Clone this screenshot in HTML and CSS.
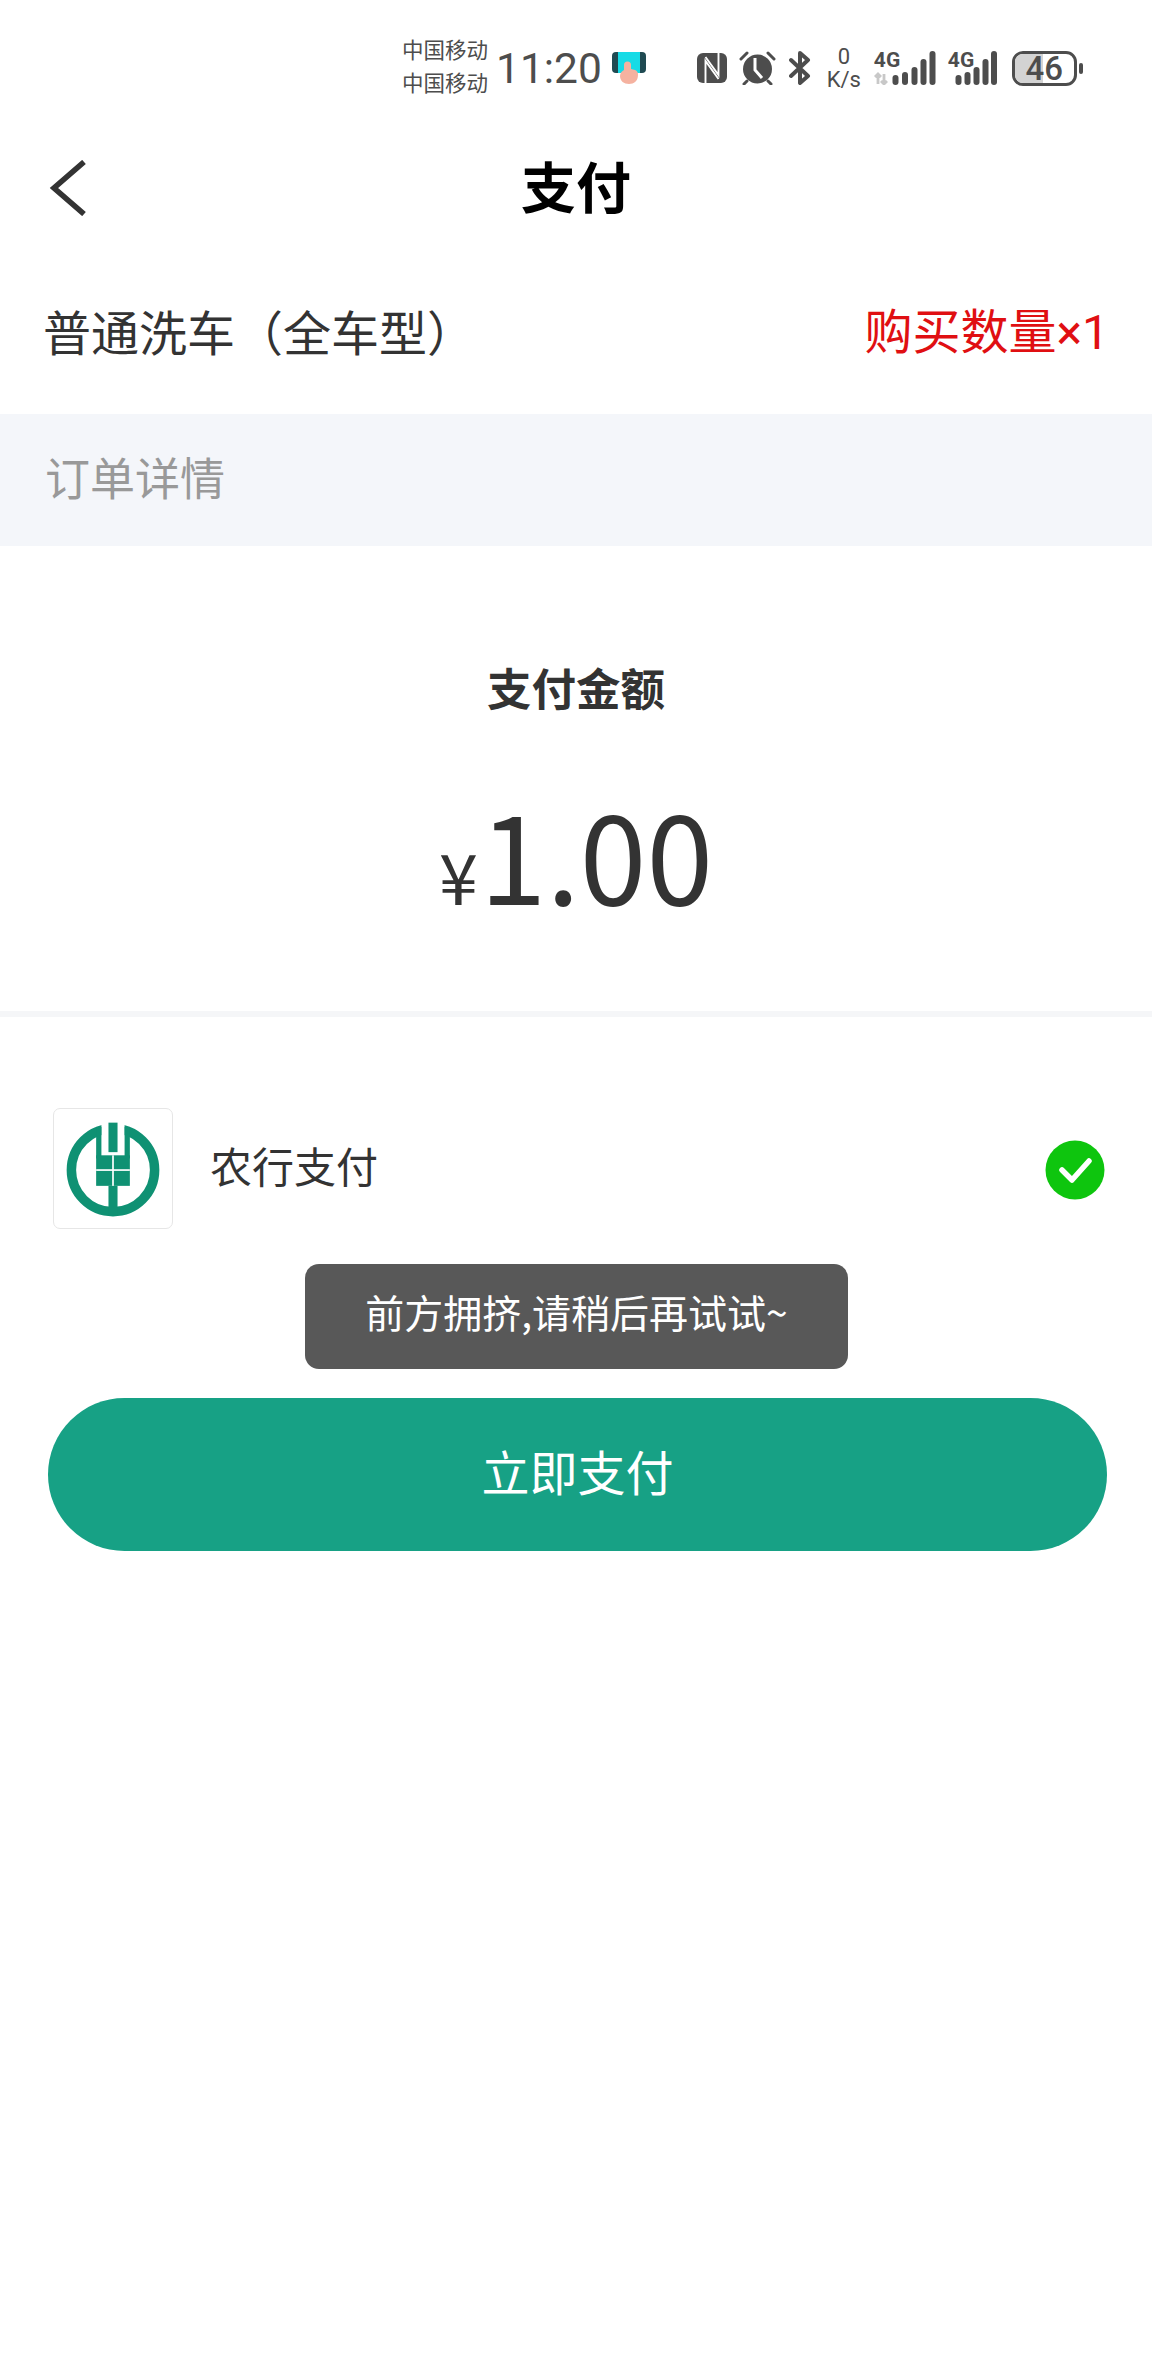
FILE: index.html
```html
<!DOCTYPE html>
<html lang="zh-CN">
	<head>
		<meta charset="UTF-8" />
		<meta name="viewport" content="width=device-width, initial-scale=1.0" />
		<title>支付</title>
		<link rel="stylesheet" href="styles.css">
	</head>
	<body>
		<div class="page">
			<div class="statusBar">
				<div class="carriers">
					<span>中国移动</span>
					<span>中国移动</span>
				</div>
				<span class="clock">11:20</span>
				<svg class="appIcon" width="34" height="34" viewBox="0 0 34 34">
					<rect x="0" y="1" width="34" height="21" rx="4" fill="#1f4a52" />
					<rect x="6" y="1" width="22" height="21" fill="#16dbe6" />
					<path d="M12 14a3.5 3.5 0 0 1 7 0v4l4 1a5 5 0 0 1 3 5c0 6-4 9-9 9s-9-3-9-8c0-3 2-5 4-6z" fill="#f5b2a0" />
				</svg>
				<svg class="nfcIcon" width="30" height="30" viewBox="0 0 30 30">
					<rect width="30" height="30" rx="6" fill="#4d4d4d" />
					<path d="M8.5 30V8l13 18" stroke="#fff" stroke-width="1.9" fill="none" />
					<path d="M21.5 0v22L8.5 4" stroke="#fff" stroke-width="1.9" fill="none" />
				</svg>
				<svg class="alarmIcon" width="37" height="34" viewBox="0 0 37 34">
					<circle cx="18.5" cy="18" r="14.5" fill="#4d4d4d" />
					<path d="M16 7v12l7 8" stroke="#fff" stroke-width="3" fill="none" />
					<path d="M2 8l6-6M35 8l-6-6M8 30l-3 3M29 30l3 3" stroke="#4d4d4d" stroke-width="3" stroke-linecap="round" />
				</svg>
				<svg class="btIcon" width="22" height="34" viewBox="0 0 22 34">
					<path d="M2 9l17 16-8 7V2l8 7L2 25" stroke="#4d4d4d" stroke-width="4" stroke-linejoin="round" stroke-linecap="round" fill="none" />
				</svg>
				<div class="speed">
					<span>0</span>
					<span>K/s</span>
				</div>
				<div class="signal">
					<span class="netType">4G</span>
					<svg width="62" height="34" viewBox="0 0 62 34">
						<path d="M4 33V23M1 26l3-3 3 3M10 23v10M7 30l3 3 3-3" stroke="#c8c8c8" stroke-width="2.8" fill="none" />
						<rect x="18.5" y="24" width="6" height="10" rx="3" fill="#4d4d4d" />
						<rect x="28" y="21" width="6" height="13" rx="3" fill="#4d4d4d" />
						<rect x="37.5" y="16" width="6" height="18" rx="3" fill="#4d4d4d" />
						<rect x="46.5" y="8" width="6" height="26" rx="3" fill="#4d4d4d" />
						<rect x="55.5" y="0" width="6" height="34" rx="3" fill="#4d4d4d" />
					</svg>
				</div>
				<div class="signal signalTwo">
					<span class="netType">4G</span>
					<svg width="49" height="34" viewBox="0 0 49 34">
						<rect x="7.5" y="24" width="6" height="10" rx="3" fill="#4d4d4d" />
						<rect x="16.5" y="21" width="6" height="13" rx="3" fill="#4d4d4d" />
						<rect x="25.5" y="16" width="6" height="18" rx="3" fill="#4d4d4d" />
						<rect x="34.5" y="8" width="6" height="26" rx="3" fill="#4d4d4d" />
						<rect x="43" y="0" width="6" height="34" rx="3" fill="#4d4d4d" />
					</svg>
				</div>
				<div class="battery">
					<div class="batteryLevel"></div>
					<span>46</span>
				</div>
				<div class="batteryNub"></div>
			</div>

			<div class="navBar">
				<svg class="backIcon" width="38" height="56" viewBox="0 0 38 56">
					<path d="M36 2L6 28l30 26" stroke="#333" stroke-width="5.6" fill="none" />
				</svg>
				<h1>支付</h1>
			</div>

			<div class="productRow">
				<span class="productName">普通洗车（全车型）</span>
				<span class="productCount">购买数量<span class="times">×1</span></span>
			</div>

			<div class="detailBand">订单详情</div>

			<div class="amountBox">
				<h2>支付金额</h2>
				<div class="amount">
					<span class="currency">¥</span>
					<span class="amountValue">1.00</span>
				</div>
			</div>

			<div class="payMethod">
				<div class="bankLogo">
					<svg width="118" height="118" viewBox="-56 -57 112 112">
						<circle cx="0" cy="0" r="39.5" stroke="#0f9173" stroke-width="9" fill="none" />
						<rect x="-11" y="-48" width="22" height="34" fill="#fff" />
						<rect x="-16" y="-41" width="5" height="30" fill="#0f9173" />
						<rect x="11" y="-41" width="5" height="30" fill="#0f9173" />
						<rect x="-16" y="-14" width="32" height="29" fill="#0f9173" />
						<rect x="-4.3" y="-45" width="8.6" height="28" fill="#0f9173" />
						<rect x="-4.3" y="15" width="8.6" height="28" fill="#0f9173" />
						<rect x="-16" y="-0.8" width="32" height="1.6" fill="#fff" />
						<rect x="-0.8" y="-14" width="1.6" height="29" fill="#fff" />
					</svg>
				</div>
				<span class="bankName">农行支付</span>
				<svg class="checkIcon" width="60" height="60" viewBox="0 0 60 60">
					<circle cx="30" cy="30" r="29.5" fill="#0ec50e" />
					<path d="M17 30l10 10 17-19" stroke="#fff" stroke-width="5.5" stroke-linecap="round" stroke-linejoin="round" fill="none" />
				</svg>
			</div>

			<button class="payButton">立即支付</button>

			<div class="toast">前方拥挤,请稍后再试试~</div>
		</div>
	</body>
</html>
```

FILE: styles.css
```css
* {
	box-sizing: border-box;
}

body {
	margin: 0;
	background: #fff;
	font-family: "Noto Sans CJK SC", "Noto Sans", sans-serif;
	color: #333;
}

.page {
	position: relative;
	min-height: 2376px;
}

.statusBar {
	display: flex;
	align-items: center;
	height: 136px;
	padding-left: 402px;
	color: #4d4d4d;
}

.carriers {
	display: flex;
	flex-direction: column;
	margin-bottom: 6px;
	font-size: 21.5px;
	line-height: 33px;
}

.clock {
	margin-left: 8px;
	padding-top: 2px;
	font-family: Roboto, sans-serif;
	font-size: 42.5px;
	line-height: 50px;
}

.appIcon {
	margin-left: 10px;
}

.nfcIcon {
	margin-left: 51px;
}

.alarmIcon {
	margin-left: 12px;
}

.btIcon {
	margin-left: 13px;
}

.speed {
	display: flex;
	flex-direction: column;
	align-items: center;
	margin-left: 15px;
	width: 36px;
	font-family: Roboto, sans-serif;
	font-size: 22px;
	line-height: 23px;
}

.signal {
	position: relative;
	margin-left: 12px;
	width: 62px;
	height: 34px;
}

.signal svg {
	display: block;
}

.signalTwo {
	margin-left: 12px;
	width: 49px;
}

.netType {
	position: absolute;
	left: 0;
	top: -1px;
	font-family: Roboto, sans-serif;
	font-size: 21px;
	font-weight: 700;
	line-height: 20px;
}

.battery {
	position: relative;
	display: flex;
	justify-content: center;
	align-items: center;
	margin-left: 15px;
	width: 65px;
	height: 35px;
	border: 3px solid #4d4d4d;
	border-radius: 11px;
	font-family: Roboto, sans-serif;
	font-size: 33px;
	font-weight: 500;
	line-height: 29px;
}

.batteryLevel {
	position: absolute;
	left: 0;
	top: 0;
	width: 28px;
	height: 100%;
	border-radius: 8px 0 0 8px;
	background: #d3d3d3;
}

.battery span {
	position: relative;
}

.batteryNub {
	margin-left: 2px;
	width: 4px;
	height: 11px;
	border-radius: 2px;
	background: #4d4d4d;
}

.navBar {
	position: relative;
	display: flex;
	justify-content: center;
	align-items: center;
	height: 104px;
	padding-bottom: 8px;
}

.navBar h1 {
	margin: 0;
	font-size: 55px;
	font-weight: 700;
	color: #000;
}

.backIcon {
	position: absolute;
	left: 48px;
	top: 24px;
}

.productRow {
	display: flex;
	justify-content: space-between;
	align-items: center;
	height: 174px;
	padding: 6px 43px 0 43px;
	font-size: 48px;
	line-height: 60px;
}

.productCount {
	color: #e00f12;
}

.times {
	font-family: Roboto, sans-serif;
}

.detailBand {
	display: flex;
	align-items: center;
	height: 132px;
	padding: 0 0 8px 45px;
	background: #f4f6fa;
	color: #999;
	font-size: 45px;
}

.amountBox {
	height: 471px;
	border-bottom: 6px solid #f5f6f8;
	padding-top: 112px;
	text-align: center;
}

.amountBox h2 {
	margin: 0;
	font-size: 44.5px;
	font-weight: 700;
	line-height: 58px;
}

.amount {
	display: flex;
	justify-content: center;
	align-items: baseline;
	margin-top: 67px;
	font-size: 120px;
	line-height: 140px;
}

.currency {
	margin-right: 2px;
	font-size: 70px;
}

.payMethod {
	display: flex;
	align-items: center;
	margin-top: 91px;
	padding: 0 47px 0 53px;
}

.bankLogo {
	display: flex;
	justify-content: center;
	align-items: center;
	width: 120px;
	height: 121px;
	border: 1px solid #e6e6e6;
	border-radius: 7px;
}

.bankName {
	flex: 1;
	margin-left: 37px;
	margin-bottom: 8px;
	font-size: 42px;
}

.checkIcon {
	margin-top: 2px;
}

.payButton {
	display: block;
	width: 1059px;
	height: 153px;
	margin: 169px 0 0 48px;
	padding-bottom: 10px;
	border: none;
	border-radius: 77px;
	background: #17a185;
	color: #fff;
	font-family: inherit;
	font-size: 48px;
}

.toast {
	position: absolute;
	left: 305px;
	top: 1264px;
	display: flex;
	justify-content: center;
	align-items: center;
	width: 543px;
	height: 105px;
	padding-bottom: 11px;
	border-radius: 14px;
	background: #585858;
	color: #fff;
	font-size: 39px;
}
```
